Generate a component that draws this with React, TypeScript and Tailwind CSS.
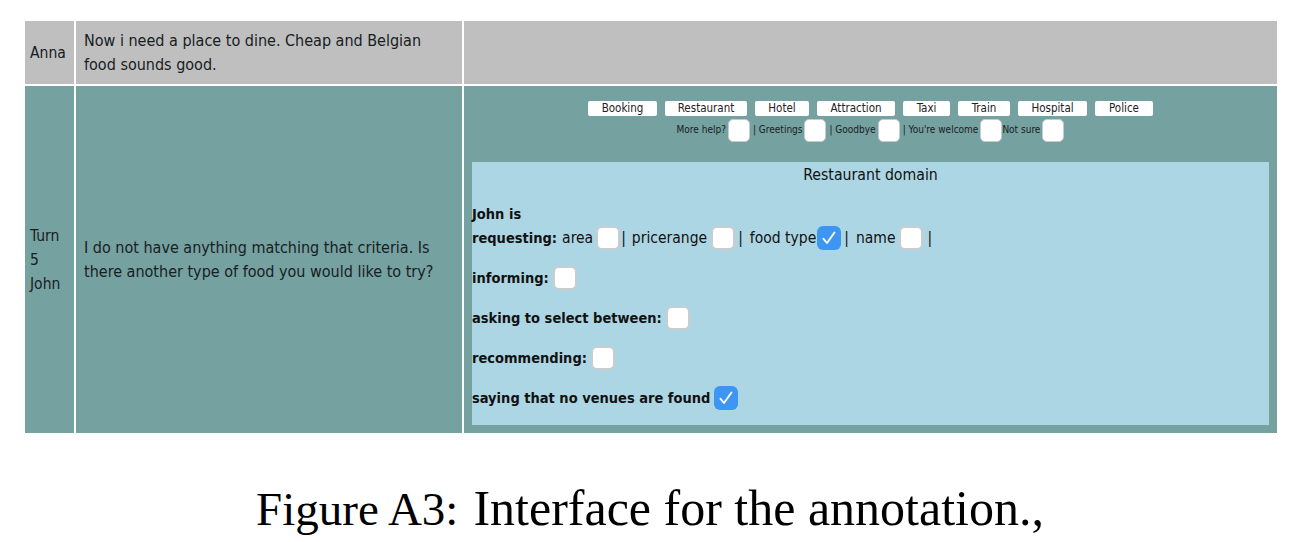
import React from "react";

const sans = { fontFamily: '"DejaVu Sans Condensed", "DejaVu Sans", sans-serif' };

function Box({ checked = false }: { checked?: boolean }) {
  if (checked) {
    return (
      <span className="flex h-[24px] w-[24px] shrink-0 items-center justify-center rounded-[6px] bg-[#3d95f4]">
        <svg width="16" height="16" viewBox="0 0 16 16" fill="none">
          <path d="M2.5 8.8 L6 13 L13.5 2.5" stroke="white" strokeWidth="1.9" strokeLinecap="round" strokeLinejoin="round" />
        </svg>
      </span>
    );
  }
  return <span className="block h-[24px] w-[24px] shrink-0 rounded-[6px] border-2 border-[#c9cdcf] bg-white" />;
}

function Small() {
  return <span className="block h-[23px] w-[22px] shrink-0 rounded-[5px] border border-[#c4cccc] bg-white" />;
}

const domains: [string, number][] = [
  ["Booking", 69],
  ["Restaurant", 82],
  ["Hotel", 54],
  ["Attraction", 78],
  ["Taxi", 47],
  ["Train", 52],
  ["Hospital", 69],
  ["Police", 58],
];

export default function App() {
  return (
    <div className="h-[542px] w-[1296px] overflow-hidden bg-white pl-[25px] pt-[21px] text-[#16201f]" style={sans}>
      <div className="grid w-[1252px] grid-cols-[49px_386px_813px] grid-rows-[63px_347px] gap-[2px] text-[15.5px] leading-[24px]">
        <div className="flex items-center bg-[#bfbfbf] pl-[5px]">Anna</div>
        <div className="flex items-center bg-[#bfbfbf] px-[8px] pt-[1px] text-[16px]">
          <p className="w-[350px]">Now i need a place to dine. Cheap and Belgian food sounds good.</p>
        </div>
        <div className="bg-[#bfbfbf]" />

        <div className="flex items-center bg-[#76a1a1] pl-[5px] pt-[1px]">
          <p>Turn<br />5<br />John</p>
        </div>
        <div className="flex items-center bg-[#76a1a1] px-[8px] pt-[1px] text-[16px]">
          <p className="w-[362px]">I do not have anything matching that criteria. Is there another type of food you would like to try?</p>
        </div>

        <div className="flex flex-col bg-[#76a1a1] px-[8px] pb-[8px] pt-[15px]">
          <div className="flex justify-center gap-[8px]">
            {domains.map(([name, w]) => (
              <span
                key={name}
                className="flex h-[15px] items-center justify-center rounded-[2px] bg-white pb-[1px] text-[11.5px] text-[#222]"
                style={{ width: w }}
              >
                {name}
              </span>
            ))}
          </div>
          <div className="mt-[3px] flex h-[22px] items-center justify-center text-[10px] leading-[24px]">
            <span>More help?</span>
            <span className="ml-[2px]"><Small /></span>
            <span className="ml-[3px]">| Greetings</span>
            <span className="ml-[2px]"><Small /></span>
            <span className="ml-[3px]">| Goodbye</span>
            <span className="ml-[2px]"><Small /></span>
            <span className="ml-[3px]">| You're welcome</span>
            <span className="ml-[2px]"><Small /></span>
            <span>Not sure</span>
            <span className="ml-[2px]"><Small /></span>
          </div>

          <div className="mt-[21px] flex-1 bg-[#add6e5] text-[#111]">
            <div className="pt-[1px] text-center text-[15.7px] leading-[23px]">Restaurant domain</div>
            <div className="mt-[16px] text-[14.5px] font-bold leading-[24px]">John is</div>
            <div className="flex h-[24px] items-center">
              <span className="text-[14.5px] font-bold">requesting:</span>
              <span className="ml-[5px]">area</span>
              <span className="ml-[3px]"><Box /></span>
              <span className="ml-[1px]">|</span>
              <span className="ml-[6px]">pricerange</span>
              <span className="ml-[4px]"><Box /></span>
              <span className="ml-[3px]">|</span>
              <span className="ml-[7px]">food type</span>
              <span className="ml-[1px]"><Box checked /></span>
              <span className="ml-[3px]">|</span>
              <span className="ml-[7px]">name</span>
              <span className="ml-[3px]"><Box /></span>
              <span className="ml-[5px]">|</span>
            </div>
            <div className="mt-[16px] flex h-[24px] items-center text-[14.5px] font-bold">
              informing:<span className="ml-[4px]"><Box /></span>
            </div>
            <div className="mt-[16px] flex h-[24px] items-center text-[14.5px] font-bold">
              asking to select between:<span className="ml-[4px]"><Box /></span>
            </div>
            <div className="mt-[16px] flex h-[24px] items-center text-[14.5px] font-bold">
              recommending:<span className="ml-[4px]"><Box /></span>
            </div>
            <div className="mt-[16px] flex h-[24px] items-center text-[14.5px] font-bold">
              saying that no venues are found<span className="ml-[4px]"><Box checked /></span>
            </div>
          </div>
        </div>
      </div>

      <div
        className="mt-[47px] flex w-[1250px] items-baseline justify-center leading-[56px] text-black"
        style={{ fontFamily: '"Liberation Serif", serif' }}
      >
        <span className="text-[47px]">Figure A3:</span>
        <span className="ml-[15px] text-[50px]">Interface for the annotation.,</span>
      </div>
    </div>
  );
}
